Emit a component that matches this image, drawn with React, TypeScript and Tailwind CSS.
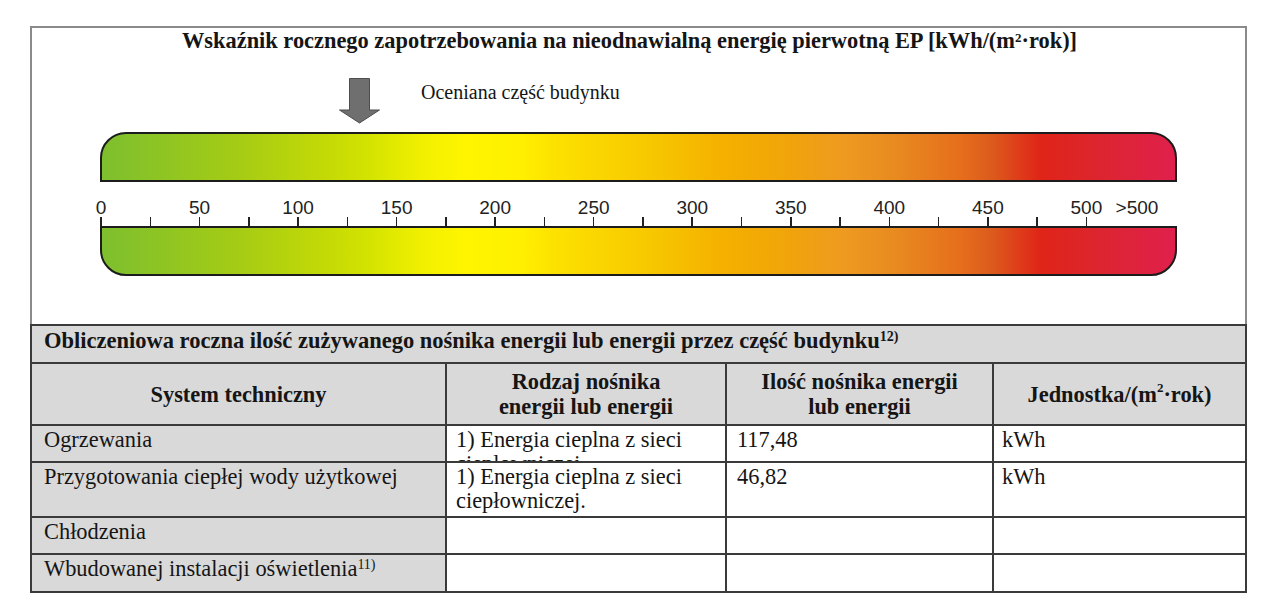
import React from 'react';

// scale: 0..500 in steps of 25, tick spacing in px
const STEP = 49.27;
const tickIndexes = Array.from({ length: 21 }, (_, i) => i);
const labelValues = [0, 50, 100, 150, 200, 250, 300, 350, 400, 450, 500];

const barFill =
  "bg-[linear-gradient(90deg,#7ebf2e_0%,#86c228_3%,#a6cc14_13%,#c4da06_21%,#d4e400_25%,#f2f000_30%,#fff500_34%,#fff000_39%,#fde200_42%,#f7c800_51%,#f5b000_58%,#f0a40a_64%,#ee9a20_69%,#e88a20_74%,#e66e1c_80%,#dc5a1c_83%,#e02418_87.5%,#dc2530_93%,#e0204c_100%)]";

interface BodyRow {
  system: React.ReactNode;
  carrier: React.ReactNode;
  amount: string;
  unit: string;
  height: string;
}

const rows: BodyRow[] = [
  { system: "Ogrzewania", carrier: <>1) Energia cieplna z sieci<br />ciepłowniczej.</>, amount: "117,48", unit: "kWh", height: "h-[35px]" },
  { system: "Przygotowania ciepłej wody użytkowej", carrier: <>1) Energia cieplna z sieci<br />ciepłowniczej.</>, amount: "46,82", unit: "kWh", height: "h-[53px]" },
  { system: "Chłodzenia", carrier: "", amount: "", unit: "", height: "h-[35px]" },
  { system: <>Wbudowanej instalacji oświetlenia<sup className="text-[14px]">11)</sup></>, carrier: "", amount: "", unit: "", height: "h-[36px]" },
];

const ArrowDown = () => (
  <svg width="42" height="46" viewBox="0 0 42 46">
    <polygon points="10.5,0.5 30.5,0.5 30.5,32 40.5,32 20.5,45 0.5,32 10.5,32" fill="#6f6f6f" stroke="#4d4d4d" strokeWidth="1" />
  </svg>
);

const App: React.FC = () => {
  return (
    <div className="min-h-[616px] w-[1280px] bg-white pl-[30px] pt-[26px] font-['Liberation_Serif','Times_New_Roman',serif] text-[#151515]">
      <div className="w-[1217px]">
        {/* energy scale */}
        <div className="h-[298px] border-2 border-b-0 border-[#8a8a8a]">
          <h1 className="pr-[18px] text-center text-[22.4px] font-bold leading-[26px]">
            Wskaźnik rocznego zapotrzebowania na nieodnawialną energię pierwotną EP [kWh/(m<sup className="text-[13px]">2</sup>·rok)]
          </h1>
          <div className="mt-[24px] flex items-start pl-[307px]">
            <ArrowDown />
            <span className="ml-[40px] mt-[2px] text-[20px] leading-[24px]">Oceniana część budynku</span>
          </div>
          <div className="ml-[68px] mt-[8px] w-[1077px]">
            <div className={`h-[50px] rounded-t-[26px] border-2 border-[#1c1c1c] ${barFill}`} />
            <div className="relative h-[44px] font-['Liberation_Sans',Arial,sans-serif] text-[19px] leading-[20px] text-[#222]">
              {labelValues.map((v, i) => (
                <span key={v} className="absolute top-[16px] -translate-x-1/2" style={{ left: 1 + i * 2 * STEP }}>
                  {v}
                </span>
              ))}
              <span className="absolute left-[1037px] top-[16px] -translate-x-1/2">&gt;500</span>
              {tickIndexes.map((i) => (
                <span key={i} className="absolute bottom-0 h-[9px] w-[1.5px] bg-[#222]" style={{ left: 0.25 + i * STEP }} />
              ))}
            </div>
            <div className={`h-[50px] rounded-b-[26px] border-2 border-[#1c1c1c] ${barFill}`} />
          </div>
        </div>

        {/* consumption table */}
        <table className="w-full table-fixed border-collapse text-[22.4px] leading-[24px]">
          <colgroup>
            <col className="w-[415px]" />
            <col className="w-[280px]" />
            <col className="w-[267px]" />
            <col />
          </colgroup>
          <tbody>
            <tr>
              <td colSpan={4} className="border-2 border-[#3a3a3a] bg-[#d9d9d9] p-0">
                <div className="h-[36px] pl-[12px] pt-[2px] text-[22.5px] font-bold leading-[26px]">
                  Obliczeniowa roczna ilość zużywanego nośnika energii lub energii przez część budynku<sup className="text-[14px]">12)</sup>
                </div>
              </td>
            </tr>
            <tr className="bg-[#d9d9d9] font-bold">
              <td className="border-2 border-[#3a3a3a] p-0">
                <div className="flex h-[60px] items-center justify-center leading-[25px]">System techniczny</div>
              </td>
              <td className="border-2 border-[#3a3a3a] p-0">
                <div className="flex h-[60px] flex-col items-center justify-center leading-[25px]">
                  <span>Rodzaj nośnika</span>
                  <span>energii lub energii</span>
                </div>
              </td>
              <td className="border-2 border-[#3a3a3a] p-0">
                <div className="flex h-[60px] flex-col items-center justify-center leading-[25px]">
                  <span>Ilość nośnika energii</span>
                  <span>lub energii</span>
                </div>
              </td>
              <td className="border-2 border-[#3a3a3a] p-0">
                <div className="flex h-[60px] items-center justify-center leading-[25px]">
                  Jednostka/(m<sup className="text-[13px]">2</sup>·rok)
                </div>
              </td>
            </tr>
            {rows.map((row, idx) => (
              <tr key={idx}>
                <td className="border-2 border-[#3a3a3a] bg-[#d9d9d9] p-0">
                  <div className={`${row.height} overflow-hidden pl-[12px] pt-[2px]`}>{row.system}</div>
                </td>
                <td className="border-2 border-[#3a3a3a] bg-white p-0">
                  <div className={`${row.height} overflow-hidden pl-[9px] pt-[2px]`}>{row.carrier}</div>
                </td>
                <td className="border-2 border-[#3a3a3a] bg-white p-0">
                  <div className={`${row.height} overflow-hidden pl-[10px] pt-[2px]`}>{row.amount}</div>
                </td>
                <td className="border-2 border-[#3a3a3a] bg-white p-0">
                  <div className={`${row.height} overflow-hidden pl-[8px] pt-[2px]`}>{row.unit}</div>
                </td>
              </tr>
            ))}
          </tbody>
        </table>
      </div>
    </div>
  );
};

export default App;
